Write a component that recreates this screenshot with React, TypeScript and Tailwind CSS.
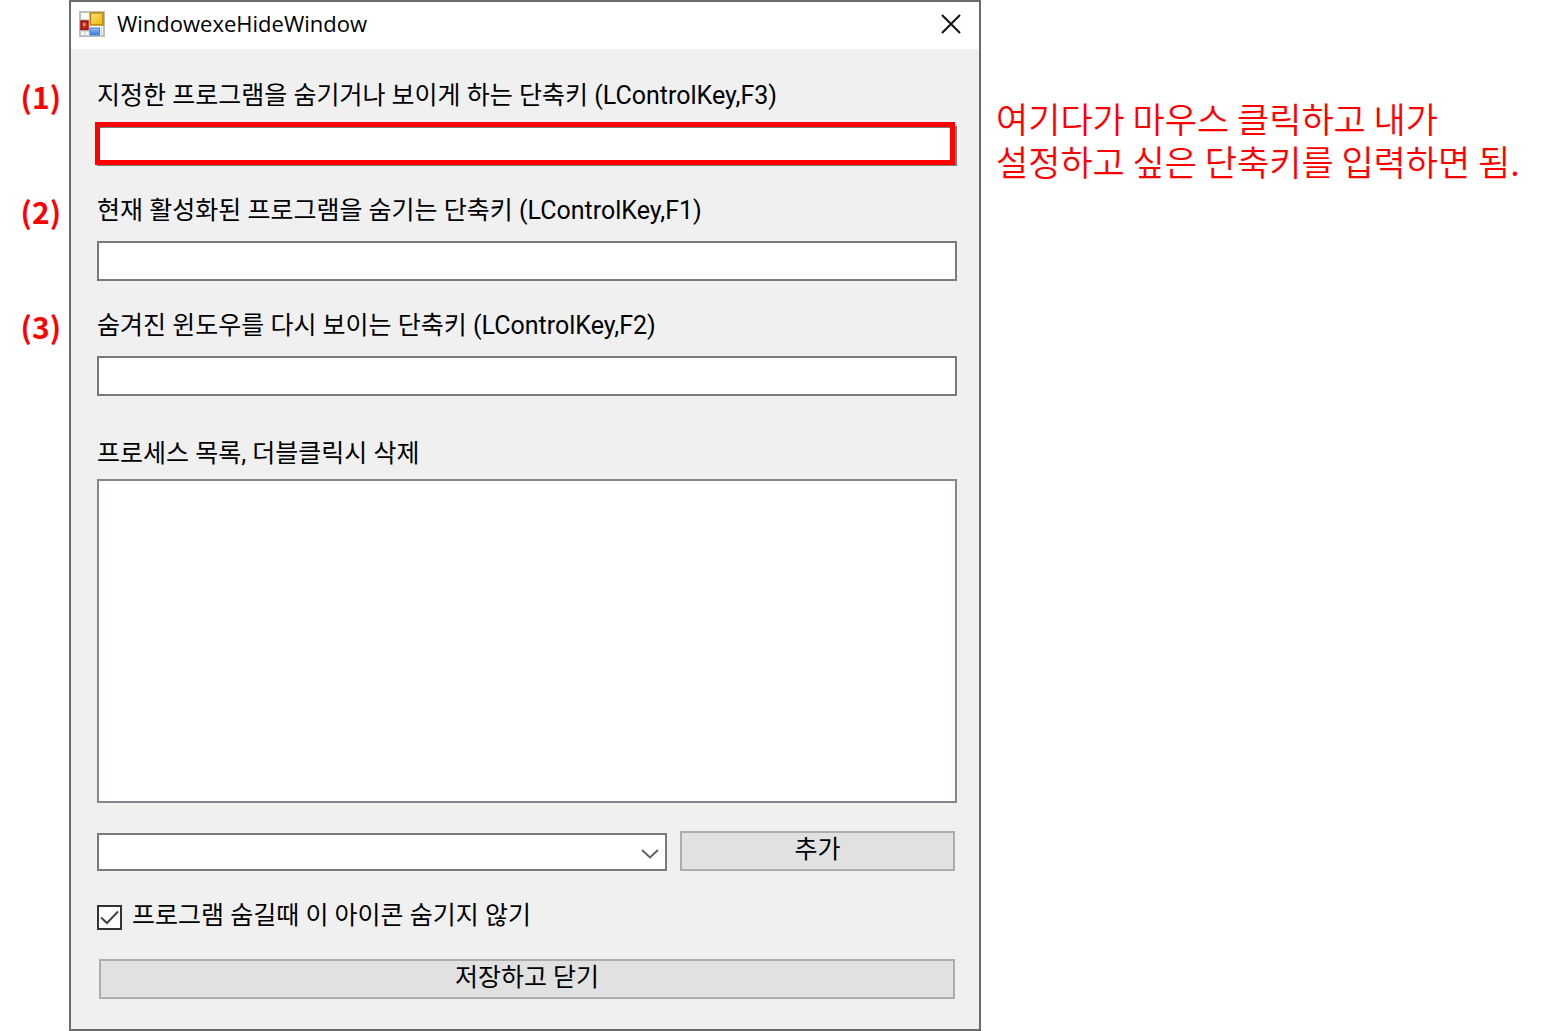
import { useState } from "react";

const FIELD =
  "block h-10 w-full appearance-none border-2 border-[#7a7a7a] bg-white px-2 text-[25px] outline-none";
const BUTTON =
  "block h-10 border-2 border-[#adadad] bg-[#e1e1e1] pb-0.5 text-[25px] leading-[30px] text-black";
const CAPTION = "block whitespace-nowrap text-[25px] leading-[30px]";

const shortcuts = [
  {
    id: "toggle",
    mark: "(1)",
    text: "지정한 프로그램을 숨기거나 보이게 하는 단축키 (LControlKey,F3)",
    highlighted: true,
  },
  {
    id: "hide",
    mark: "(2)",
    text: "현재 활성화된 프로그램을 숨기는 단축키 (LControlKey,F1)",
    highlighted: false,
  },
  {
    id: "show",
    mark: "(3)",
    text: "숨겨진 윈도우를 다시 보이는 단축키 (LControlKey,F2)",
    highlighted: false,
  },
];

function FormIcon() {
  return (
    <svg viewBox="0 0 26 26" className="size-[26px]" aria-hidden="true">
      <defs>
        <linearGradient id="gold" x1="0" y1="0" x2="1" y2="1">
          <stop offset="0" stopColor="#ffe680" />
          <stop offset="1" stopColor="#eeb000" />
        </linearGradient>
        <linearGradient id="azure" x1="0" y1="0" x2="0" y2="1">
          <stop offset="0" stopColor="#8fc0ff" />
          <stop offset="1" stopColor="#3878dc" />
        </linearGradient>
      </defs>
      <rect x="1" y="1" width="24" height="24" fill="#fff" stroke="#bcbcbc" strokeWidth="2" />
      <path d="M10.500 1V25M1 9H10M1 20H10M6 20V25M22.500 16V25" stroke="#cfcfcf" strokeWidth="1.500" />
      <rect x="11.500" y="2" width="12.500" height="12" fill="url(#gold)" stroke="#b8860b" strokeWidth="1.500" />
      <rect x="2" y="10" width="7" height="8.500" fill="#c8281c" stroke="#96150c" strokeWidth="1.500" />
      <rect x="4" y="12" width="2.500" height="3" fill="#f08a78" />
      <rect x="11" y="17" width="9.500" height="7" fill="url(#azure)" stroke="#4a80d0" />
    </svg>
  );
}

export default function App() {
  const [keep, setKeep] = useState(true);

  return (
    <div className="grid grid-cols-[69px_minmax(0,912fr)_minmax(0,566fr)] items-start bg-white font-['Roboto','Noto_Sans_CJK_KR',sans-serif] text-black">
      <div className="flex flex-col gap-[85px] pt-[81px] pr-2 text-right font-['Noto_Sans_CJK_KR',sans-serif] text-[30px] leading-[30px] font-bold text-[#ff0000]">
        {shortcuts.map((s) => (
          <span key={s.id}>{s.mark}</span>
        ))}
      </div>

      <main className="border-2 border-[#6b6b6b] bg-[#f0f0f0]">
        <header className="flex h-[47px] items-center bg-white pr-[18px] pb-[3px] pl-2">
          <FormIcon />
          <h1 className="ml-3 flex-1 pb-0.5 font-['Open_Sans',sans-serif] text-[22px] leading-8 text-black">
            WindowexeHideWindow
          </h1>
          <button type="button" aria-label="닫기" className="block">
            <svg viewBox="0 0 20 20" className="size-5" aria-hidden="true">
              <path d="M1 1L19 19M19 1L1 19" fill="none" stroke="#111" strokeWidth="2" />
            </svg>
          </button>
        </header>

        <form className="pt-8 pr-[22px] pb-[30px] pl-[26px]" onSubmit={(e) => e.preventDefault()}>
          <div className="flex flex-col gap-[30px]">
            {shortcuts.map((s) => (
              <div key={s.id}>
                <label htmlFor={s.id} className={CAPTION}>
                  {s.text}
                </label>
                <div className="relative mt-[15px]">
                  <input id={s.id} type="text" className={FIELD} />
                  {s.highlighted && (
                    <span className="pointer-events-none absolute -top-1 right-0.5 bottom-px -left-0.5 border-5 border-[#ff0000]" />
                  )}
                </div>
              </div>
            ))}
          </div>

          <label htmlFor="processes" className={`${CAPTION} mt-[43px]`}>
            프로세스 목록, 더블클릭시 삭제
          </label>
          <select
            id="processes"
            size={8}
            className="mt-2.5 block h-81 w-full appearance-none border-2 border-[#828790] bg-white outline-none"
          />

          <div className="mt-7 mr-0.5 flex items-end gap-[13px]">
            <div className="relative min-w-0 flex-1">
              <select
                aria-label="프로세스"
                className="block h-[38px] w-full appearance-none border-2 border-[#7a7a7a] bg-white px-2 text-2xl outline-none"
              />
              <svg
                viewBox="0 0 18 10"
                className="pointer-events-none absolute top-4 right-2 h-2.5 w-[18px]"
                aria-hidden="true"
              >
                <path d="M1 1L9 8.500L17 1" fill="none" stroke="#606060" strokeWidth="2" />
              </svg>
            </div>
            <button type="button" className={`${BUTTON} w-[275px]`}>
              추가
            </button>
          </div>

          <div className="mt-[30px] flex h-[30px] items-center gap-2.5">
            <div className="relative mt-0.5 size-[25px]">
              <input
                id="keep"
                type="checkbox"
                checked={keep}
                onChange={(e) => setKeep(e.target.checked)}
                className="block size-[25px] appearance-none border-2 border-[#333] bg-white"
              />
              {keep && (
                <svg viewBox="0 0 25 25" className="pointer-events-none absolute inset-0 size-[25px]" aria-hidden="true">
                  <path d="M4 12.500L10 18L21 6.500" fill="none" stroke="#444" strokeWidth="2" />
                </svg>
              )}
            </div>
            <label htmlFor="keep" className={CAPTION}>
              프로그램 숨길때 이 아이콘 숨기지 않기
            </label>
          </div>

          <div className="mt-7 mr-0.5 ml-0.5">
            <button type="submit" className={`${BUTTON} w-full`}>
              저장하고 닫기
            </button>
          </div>
        </form>
      </main>

      <p className="pt-24 pl-[15px] font-['Noto_Sans_CJK_KR',sans-serif] text-[35px] leading-[43px] font-[350] whitespace-nowrap text-[#ff0000]">
        여기다가 마우스 클릭하고 내가
        <br />
        설정하고 싶은 단축키를 입력하면 됨.
      </p>
    </div>
  );
}
